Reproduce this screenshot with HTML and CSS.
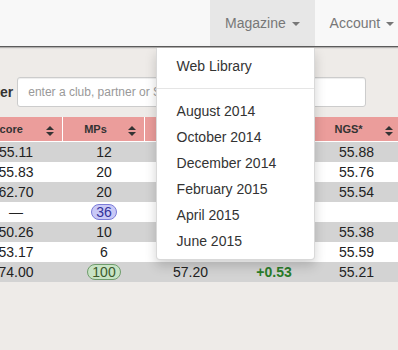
FILE: index.html
```html
<!DOCTYPE html>
<html lang="en">
<head>
    <meta charset="UTF-8">
    <title>Player Results</title>
    <link rel="stylesheet" href="styles.css">
</head>
<body>

    <!-- Navbar -->
    <nav class="navbar">
        <ul class="nav-right">
            <li class="nav-item open">
                <a class="nav-link" href="#">Magazine <span class="caret"></span></a>
                <ul class="dropdown-menu">
                    <li><a href="#">Web Library</a></li>
                    <li class="divider"></li>
                    <li><a href="#">August 2014</a></li>
                    <li><a href="#">October 2014</a></li>
                    <li><a href="#">December 2014</a></li>
                    <li><a href="#">February 2015</a></li>
                    <li><a href="#">April 2015</a></li>
                    <li><a href="#">June 2015</a></li>
                </ul>
            </li>
            <li class="nav-item">
                <a class="nav-link" href="#">Account <span class="caret"></span></a>
            </li>
        </ul>
    </nav>

    <!-- Results -->
    <section class="content">
        <div class="filter-row">
            <label class="filter-label" for="filter">Filter</label>
            <input type="text" id="filter" class="filter-input" placeholder="enter a club, partner or Sim">
        </div>

        <table class="results">
            <colgroup>
                <col class="c-score">
                <col class="c-mps">
                <col class="c-avg">
                <col class="c-diff">
                <col class="c-ngs">
            </colgroup>
            <thead>
                <tr>
                    <th><svg class="sort" viewBox="0 0 8 10"><polygon points="0,4 4,0 8,4"/><polygon points="0,6 4,10 8,6"/></svg>Score</th>
                    <th><svg class="sort" viewBox="0 0 8 10"><polygon points="0,4 4,0 8,4"/><polygon points="0,6 4,10 8,6"/></svg>MPs</th>
                    <th></th>
                    <th></th>
                    <th><svg class="sort" viewBox="0 0 8 10"><polygon points="0,4 4,0 8,4"/><polygon points="0,6 4,10 8,6"/></svg>NGS*</th>
                </tr>
            </thead>
            <tbody>
                <tr><td>55.11</td><td>12</td><td></td><td></td><td>55.88</td></tr>
                <tr><td>55.83</td><td>20</td><td></td><td></td><td>55.76</td></tr>
                <tr><td>62.70</td><td>20</td><td></td><td></td><td>55.54</td></tr>
                <tr><td>&mdash;</td><td><span class="badge blue">36</span></td><td></td><td></td><td></td></tr>
                <tr><td>50.26</td><td>10</td><td></td><td></td><td>55.38</td></tr>
                <tr><td>53.17</td><td>6</td><td></td><td></td><td>55.59</td></tr>
                <tr><td>74.00</td><td><span class="badge green">100</span></td><td>57.20</td><td class="up">+0.53</td><td>55.21</td></tr>
            </tbody>
        </table>
    </section>

</body>
</html>
```

FILE: styles.css
```css
html, body {
    overflow: hidden;
}

body {
    font-family: "Liberation Sans", Arial, sans-serif;
    font-size: 14px;
    line-height: 20px;
    color: #333;
    background-color: #eeebe8;
    margin: 0;
    padding: 0;
}

/* Navbar */
.navbar {
    background-color: #f8f8f8;
    border-bottom: 1px solid #5c5c5c;
    box-shadow: 0 1px 1px rgba(0, 0, 0, 0.25);
    position: relative;
    z-index: 10;
}

.nav-right {
    display: flex;
    list-style: none;
    margin: 0;
    padding: 0 0 0 210px;
    white-space: nowrap;
}

.nav-item {
    position: relative;
}

.nav-link {
    display: block;
    padding: 13px 15px;
    color: #777;
    text-decoration: none;
}

.nav-item.open > .nav-link {
    background-color: #e7e7e7;
}

.caret {
    display: inline-block;
    width: 0;
    height: 0;
    margin-left: 2px;
    vertical-align: middle;
    border-top: 4px solid #777;
    border-left: 4px solid transparent;
    border-right: 4px solid transparent;
}

.dropdown-menu {
    position: absolute;
    top: calc(100% + 2px);
    right: 0;
    width: 159px;
    box-sizing: border-box;
    list-style: none;
    margin: 0;
    padding: 5px 0;
    background-color: #fff;
    border: 1px solid rgba(0, 0, 0, 0.15);
    border-top: none;
    border-radius: 0 0 4px 4px;
    box-shadow: 0 6px 12px rgba(0, 0, 0, 0.175);
}

.dropdown-menu a {
    display: block;
    padding: 3px 20px;
    color: #333;
    text-decoration: none;
}

.dropdown-menu .divider {
    height: 1px;
    margin: 9px 0;
    background-color: #e5e5e5;
}

/* Content */
.content {
    margin-left: -31px;
}

.filter-row {
    display: flex;
    align-items: center;
    gap: 4px;
    margin-top: 30px;
    padding-left: 10px;
}

.filter-label {
    font-weight: bold;
    color: #333;
}

.filter-input {
    width: 349px;
    height: 30px;
    box-sizing: border-box;
    padding: 5px 10px;
    font-family: inherit;
    font-size: 12px;
    border: 1px solid #ccc;
    border-radius: 3px;
    background-color: #fff;
    box-shadow: inset 0 1px 1px rgba(0, 0, 0, 0.075);
}

.filter-input::placeholder {
    color: #999;
}

/* Table */
.results {
    margin-top: 10px;
    width: 432px;
    table-layout: fixed;
    border-collapse: separate;
    border-spacing: 0;
}

.c-score { width: 94px; }
.c-mps { width: 82px; }
.c-avg { width: 91px; }
.c-diff { width: 76px; }
.c-ngs { width: 89px; }

.results th {
    height: 24px;
    padding: 0;
    background-color: #eb9d9b;
    border-right: 1px solid #fff;
    border-bottom: 1px solid #fff;
    font-size: 11px;
    font-weight: bold;
    color: #333;
    text-align: center;
}

.results th:last-child {
    border-right: none;
}

.sort {
    float: right;
    width: 8px;
    height: 10px;
    margin: 7px 8px 0 0;
    fill: #333;
}

.results td {
    padding: 0;
    height: 20px;
    text-align: center;
    color: #222;
    white-space: nowrap;
}

.results tbody tr:nth-child(odd) td {
    background-color: #d3d3d3;
}

.results tbody tr:nth-child(even) td {
    background-color: #fff;
}

.up {
    color: #2a7d2a !important;
    font-weight: bold;
}

.badge {
    display: inline-block;
    padding: 0 4px;
    line-height: 14px;
    border: 1px solid;
    border-radius: 9px;
}

.badge.blue {
    background-color: #c9c9f7;
    border-color: #7b7bd8;
    color: #33339a;
}

.badge.green {
    background-color: #c7e3c4;
    border-color: #6f9c6c;
    color: #3c5a2c;
}
```
